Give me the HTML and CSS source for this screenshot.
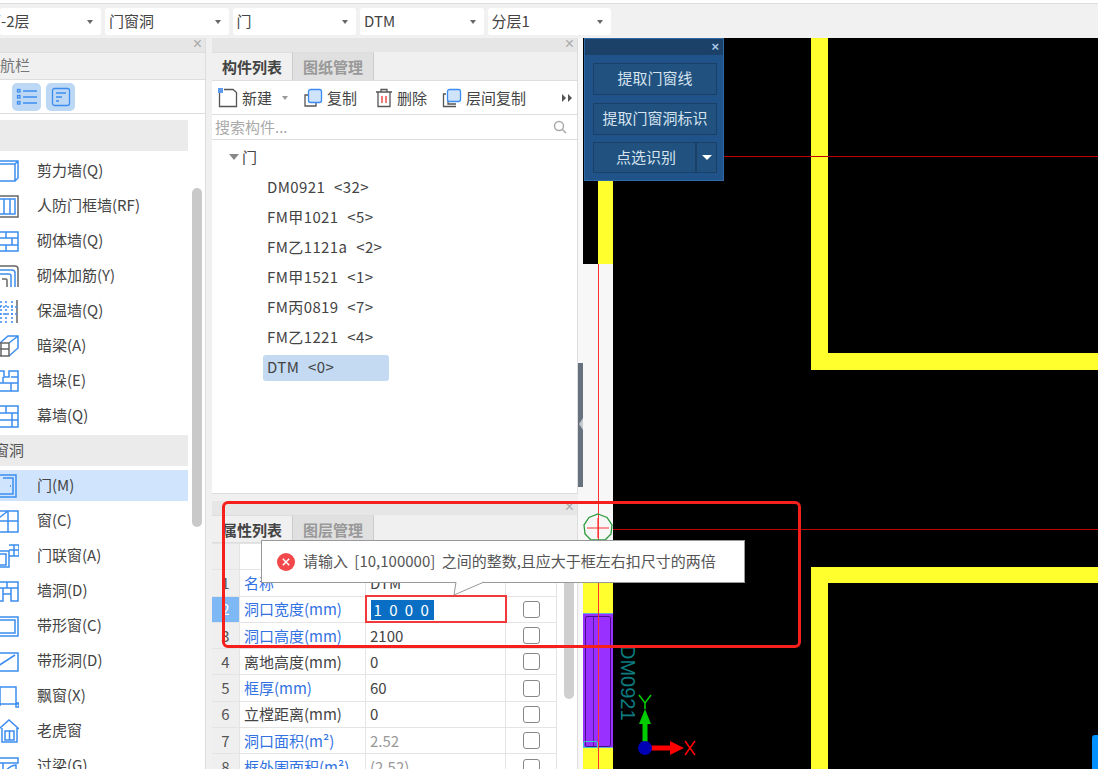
FILE: index.html
```html
<!DOCTYPE html>
<html lang="zh">
<head>
<meta charset="utf-8">
<title>门窗洞</title>
<link rel="stylesheet" href="styles.css">
</head>
<body>
<div class="app">
  <header class="topbar">
    <div class="sel sel-first"><span class="clip-first">第-2层</span><i class="caret"></i></div>
    <div class="sel"><span>门窗洞</span><i class="caret"></i></div>
    <div class="sel"><span>门</span><i class="caret"></i></div>
    <div class="sel"><span>DTM</span><i class="caret"></i></div>
    <div class="sel"><span>分层1</span><i class="caret"></i></div>
  </header>
  <main class="main">
    <aside class="nav">
      <div class="panel-head"><span class="close">×</span></div>
      <div class="nav-title"><span>导航栏</span></div>
      <div class="nav-tools">
        <button class="tool-btn"><svg width="22" height="22" viewBox="0 0 22 22"><g fill="none" stroke="#3d8df0" stroke-width="1.3"><rect x="1.500" y="3.500" width="2.500" height="2.500"/><rect x="1.500" y="9.500" width="2.500" height="2.500"/><rect x="1.500" y="15.500" width="2.500" height="2.500"/><path d="M7 5H21M7 11H21M7 17H21"/></g></svg></button>
        <button class="tool-btn"><svg width="20" height="22" viewBox="0 0 20 22"><g fill="none" stroke="#3d8df0" stroke-width="1.300"><rect x="1.500" y="2.500" width="17" height="17" rx="2"/><path d="M5 7H15M5 11H11M5 15H8"/></g></svg></button>
      </div>
      <div class="nav-body">
        <ul class="nav-list">
          <li class="nav-group"></li>
          <li class="nav-row"><svg class="ic" viewBox="0 0 24 24"><path d="M0 5H20V22H0M20 22l3-3V2H3L0 5M20 5l3-3"/></svg>剪力墙(Q)</li>
          <li class="nav-row"><svg class="ic" viewBox="0 0 24 24"><path class="dk" d="M0 2H23V23H0"/><path d="M0 5H20V20H0M9 5V20M15 5V20"/></svg>人防门框墙(RF)</li>
          <li class="nav-row"><svg class="ic" viewBox="0 0 24 24"><path d="M0 3H23V22H0M0 9H23M0 16H23M11 3V9M17 9V16M11 16V22"/></svg>砌体墙(Q)</li>
          <li class="nav-row"><svg class="ic" viewBox="0 0 24 24"><path class="dk" d="M0 2H20Q23 2 23 5V23"/><path d="M0 6H17Q20 6 20 9V23M0 10H14Q16 10 16 12V23"/><path class="dk" d="M7 15H11Q12 15 12 16V23"/></svg>砌体加筋(Y)</li>
          <li class="nav-row"><svg class="ic" viewBox="0 0 24 24"><path class="dk" d="M22 1V24"/><path stroke-dasharray="2 2" d="M6 2V24M11 2V24M17 2V24M0 8H23M0 15H23"/></svg>保温墙(Q)</li>
          <li class="nav-row"><svg class="ic" viewBox="0 0 24 24"><path d="M14 9L23 2M5 9L13 2H23V14L14 22"/><path class="dk" d="M0 9H14V22H0M0 15H14M6 9V22"/></svg>暗梁(A)</li>
          <li class="nav-row"><svg class="ic" viewBox="0 0 24 24"><path d="M3 2H9V8H14V2H23V22H0V8H3M0 14H23M8 8V14M16 8H23M16 14V22"/></svg>墙垛(E)</li>
          <li class="nav-row"><svg class="ic" viewBox="0 0 24 24"><path d="M0 2H23V23H0M0 9H23M0 16H23M11 2V9M17 9V23"/></svg>幕墙(Q)</li>
          <li class="nav-group"><span class="clip-group">门窗洞</span></li>
          <li class="nav-row active"><svg class="ic" viewBox="0 0 24 24"><path d="M5 1H21V23H5M8 4H18V20H5M15 12h1"/></svg>门(M)</li>
          <li class="nav-row"><svg class="ic" viewBox="0 0 24 24"><path d="M0 2H23V23H0M0 12H23M13 2V23M0 12L13 2"/></svg>窗(C)</li>
          <li class="nav-row"><svg class="ic" viewBox="0 0 24 24"><path d="M2 7H14V23H2M5 10H11V21H5M14 1H24V12H14M19 1V12M14 6H24"/></svg>门联窗(A)</li>
          <li class="nav-row"><svg class="ic" viewBox="0 0 24 24"><path d="M0 3H23V22H16V15H8V22H0ZM0 9H23M12 3V9M16 9V15M8 9V15"/></svg>墙洞(D)</li>
          <li class="nav-row"><svg class="ic" viewBox="0 0 24 24"><path d="M0 3H23V22H0M0 6H20V19H0"/></svg>带形窗(C)</li>
          <li class="nav-row"><svg class="ic" viewBox="0 0 24 24"><path d="M0 4H23V22H0M0 19L20 6"/></svg>带形洞(D)</li>
          <li class="nav-row"><svg class="ic" viewBox="0 0 24 24"><path d="M5 22V3H21V22M3 20H24M21 19h3v4h-3z"/></svg>飘窗(X)</li>
          <li class="nav-row"><svg class="ic" viewBox="0 0 24 24"><path d="M4 10L14 1L24 10M7 9V23H22V9M10 12H19V21H10ZM14.500 12V21"/></svg>老虎窗</li>
          <li class="nav-row"><svg class="ic" viewBox="0 0 24 24"><path d="M5 4H23V9H5M8 9V22M8 22Q12 12 21 11V22"/></svg>过梁(G)</li>
        </ul>
        <div class="nav-scroll"></div>
      </div>
    </aside>

    <section class="center">
      <div class="panel list-panel">
        <div class="panel-head"><span class="close">×</span></div>
        <div class="tabs"><span class="tab on">构件列表</span><span class="tab">图纸管理</span></div>
        <div class="toolbar">
          <span class="tb-item"><svg width="20" height="20" viewBox="0 0 20 20"><path fill="none" stroke="#555" stroke-width="1.300" d="M1.500 5V18.500H18.500V4.500L15 1.500H6"/><rect x="0" y="0" width="5" height="5" fill="#5d9bec"/></svg>新建<i class="caret small"></i></span>
          <span class="tb-item"><svg width="20" height="20" viewBox="0 0 20 20"><path fill="none" stroke="#555" stroke-width="1.300" d="M5 7H2V18H13V15"/><rect x="5.500" y="1.500" width="13" height="13" rx="2" fill="#cfe3fb" stroke="#3d8df0" stroke-width="1.300"/></svg>复制</span>
          <span class="tb-item"><svg width="21" height="20" viewBox="-3 0 21 20"><path fill="none" stroke="#555" stroke-width="1.300" d="M1 4H17M6 4V1.500H12V4M3 4V18.500H15V4"/><path fill="none" stroke="#e33" stroke-width="1.300" d="M7 8V15M11 8V15"/></svg>删除</span>
          <span class="tb-item"><svg width="20" height="20" viewBox="0 0 20 20"><path fill="none" stroke="#555" stroke-width="1.300" d="M4 6H1.500V18.500H14M6 9V16H14"/><rect x="5.500" y="1.500" width="13" height="12" rx="2" fill="#cfe3fb" stroke="#3d8df0" stroke-width="1.300"/></svg>层间复制</span>
          <span class="tb-more"><svg width="10" height="8" viewBox="0 0 10 8"><path d="M0 0L4 4L0 8ZM6 0L10 4L6 8Z" fill="#555"/></svg></span>
        </div>
        <div class="search"><span>搜索构件...</span><svg width="14" height="14" viewBox="0 0 14 14"><circle cx="6" cy="6" r="4.500" fill="none" stroke="#aaa" stroke-width="1.500"/><path d="M9.500 9.500L13 13" stroke="#aaa" stroke-width="1.500"/></svg></div>
        <ul class="tree">
          <li class="tree-root"><i class="caret tri"></i>门</li>
          <li class="tree-item"><span>DM0921 &lt;32&gt;</span></li>
          <li class="tree-item"><span>FM甲1021 &lt;5&gt;</span></li>
          <li class="tree-item"><span>FM乙1121a &lt;2&gt;</span></li>
          <li class="tree-item"><span>FM甲1521 &lt;1&gt;</span></li>
          <li class="tree-item"><span>FM丙0819 &lt;7&gt;</span></li>
          <li class="tree-item"><span>FM乙1221 &lt;4&gt;</span></li>
          <li class="tree-item sel-item"><span>DTM &lt;0&gt;</span></li>
        </ul>
      </div>
      <div class="panel prop-panel">
        <div class="panel-head"><span class="close">×</span></div>
        <div class="tabs"><span class="tab on">属性列表</span><span class="tab">图层管理</span></div>
        <div class="prop-body">
          <table class="props">
            <colgroup><col class="c1"><col class="c2"><col class="c3"><col class="c4"></colgroup>
            <tr class="head"><td class="idx"></td><td></td><td></td><td></td></tr>
            <tr><td class="idx">1</td><td class="link">名称</td><td>DTM</td><td class="chk"></td></tr>
            <tr><td class="idx cur">2</td><td class="link">洞口宽度(mm)</td><td class="editing"><span class="hl">1 0 0 0</span></td><td class="chk"><i class="box"></i></td></tr>
            <tr><td class="idx">3</td><td class="link">洞口高度(mm)</td><td>2100</td><td class="chk"><i class="box"></i></td></tr>
            <tr><td class="idx">4</td><td>离地高度(mm)</td><td>0</td><td class="chk"><i class="box"></i></td></tr>
            <tr><td class="idx">5</td><td class="link">框厚(mm)</td><td>60</td><td class="chk"><i class="box"></i></td></tr>
            <tr><td class="idx">6</td><td>立樘距离(mm)</td><td>0</td><td class="chk"><i class="box"></i></td></tr>
            <tr><td class="idx">7</td><td class="link">洞口面积(m²)</td><td class="mute">2.52</td><td class="chk"><i class="box"></i></td></tr>
            <tr><td class="idx">8</td><td class="link">框外围面积(m²)</td><td class="mute">(2.52)</td><td class="chk"><i class="box"></i></td></tr>
          </table>
          <div class="prop-scroll"></div>
        </div>
      </div>
    </section>

    <div class="gutter"><div class="handle"></div></div>

    <section class="canvas">
      <div class="y a1"></div>
      <div class="y a2"></div>
      <div class="y a3"></div>
      <div class="y a4"></div>
      <div class="y a5"></div>
      <div class="blank"></div>
      <div class="y a6"></div>
      <div class="door"><div class="door-in"></div><div class="door-foot"></div></div>
      <div class="y a7"></div>
      <div class="rv"></div>
      <div class="rh r1"></div>
      <div class="rh r2"></div>
      <svg class="mark" width="30" height="30" viewBox="0 0 30 30"><polygon points="15,1 24,4.500 29,12 28,21 22,27 8,27 2,21 1,12 6,4.500" fill="none" stroke="#2a9a3a" stroke-width="1.300"/><path d="M4 15H26M15 5V25" stroke="#f33" stroke-width="1.200"/></svg>
      <div class="dm">DM0921</div>
      <svg class="axis" width="70" height="70" viewBox="0 0 70 70"><path d="M10 54V24" stroke="#0c0" stroke-width="5"/><path d="M10 15L16 30H4Z" fill="#0c0"/><path d="M10 54H40" stroke="#f00" stroke-width="5"/><path d="M49 54L35 47V61Z" fill="#f00"/><circle cx="10" cy="54" r="7" fill="#0000b4"/><path d="M4 1L10 9L16 1M10 9V15" fill="none" stroke="#0c0" stroke-width="1.600"/><path d="M50 47L60 61M60 47L50 61" fill="none" stroke="#f00" stroke-width="1.600"/></svg>
      <div class="corner"></div>

      <div class="float">
        <div class="float-head"><span>×</span></div>
        <div class="float-btn">提取门窗线</div>
        <div class="float-btn">提取门窗洞标识</div>
        <div class="float-split">
          <div class="float-btn grow">点选识别</div>
          <div class="float-btn drop"><i class="caret white"></i></div>
        </div>
      </div>
    </section>
  </main>

  <div class="tooltip">
    <svg class="err" width="18" height="18" viewBox="0 0 18 18"><circle cx="9" cy="9" r="9" fill="#f2484b"/><path d="M5.800 5.800L12.200 12.200M12.200 5.800L5.800 12.200" stroke="#fff" stroke-width="1.500"/></svg>
    <span class="tip-text">请输入 [10,100000] 之间的整数,且应大于框左右扣尺寸的两倍</span>
    <svg class="tail" width="34" height="16" viewBox="0 0 34 16"><path d="M3 0L1 13L31 0" fill="#fff" stroke="#999"/><path d="M3.500 0H30V-1H3.500Z" fill="#fff"/></svg>
  </div>
  <div class="annot"></div>
</div>
</body>
</html>
```
FILE: styles.css
```css
* { box-sizing: border-box; }
html, body { margin: 0; height: 100%; }
body { overflow: hidden; background: #fff; }
ul { list-style: none; margin: 0; padding: 0; }
.app {
  position: relative;
  width: 1098px;
  height: 769px;
  overflow: hidden;
  display: flex;
  flex-direction: column;
  background: #f0f0f0;
  font: 15px/20px "Noto Sans CJK SC", "Noto Sans", sans-serif;
  color: #444;
}
.topbar {
  height: 38px;
  flex: none;
  display: flex;
  gap: 4px;
  background: #f1f1f1;
  border-top: 3px solid #fff;
  box-shadow: inset 0 1px 0 #ddd;
  padding-top: 5px;
}
.sel {
  width: 123.500px;
  height: 27px;
  background: #fff;
  border-radius: 3px;
  display: flex;
  align-items: center;
  justify-content: space-between;
  padding: 0 8px 0 4px;
  white-space: nowrap;
}
.sel span { margin-bottom: 2px; }
.sel-first { width: 101px; padding-left: 0; overflow: hidden; }
.clip-first { margin-left: -14px; }
.caret {
  display: block;
  width: 0;
  height: 0;
  border: 3.500px solid transparent;
  border-top: 4px solid #666;
  border-bottom: 0;
}
.caret.small { border-top-color: #999; margin-left: 6px; }
.caret.white { border-top-color: #fff; border-width: 5px 5px 0; }
.caret.tri { border-top-color: #888; border-width: 6px 5px 0; margin: 0 3px 0 -13px; }

.main { flex: 1; min-height: 0; display: flex; }
.nav { width: 206px; flex: none; display: flex; flex-direction: column; background: #fff; border-right: 1px solid #ddd; }
.panel-head { height: 14px; flex: none; background: #e6e6e6; position: relative; }
.close { position: absolute; right: 3px; top: -3px; color: #aaa; font: 16px/18px "Liberation Sans", sans-serif; }
.nav-title { height: 28px; flex: none; background: #f0f0f0; border-top: 1px solid #ddd; border-bottom: 1px solid #ddd; overflow: hidden; color: #777; line-height: 24px; }
.nav-title span { margin-left: -15px; display: block; }
.nav-tools { height: 34px; flex: none; display: flex; gap: 5px; align-items: center; padding-left: 12px; border-bottom: 1px solid #ddd; }
.tool-btn { width: 29px; height: 28px; padding: 0; border: 0; border-radius: 5px; background: #bcd8f5; display: flex; align-items: center; justify-content: center; }
.nav-body { flex: 1; min-height: 0; display: flex; padding-top: 6px; overflow: hidden; }
.nav-list { width: 188px; flex: none; display: flex; flex-direction: column; gap: 4px; }
.nav-group { height: 31px; flex: none; background: #ebebeb; line-height: 30px; color: #555; overflow: hidden; }
.clip-group { display: block; margin-left: -21px; }
.nav-row { height: 31px; flex: none; display: flex; align-items: center; gap: 18px; color: #444; white-space: nowrap; padding-bottom: 2px; }
.nav-row.active { background: #d0e5fd; }
.ic { width: 24px; height: 24px; margin: 2px 0 0 -5px; flex: none; fill: none; stroke: #3d8df0; stroke-width: 1.500; }
.ic .dk { stroke: #666; }
.nav-scroll { width: 10px; height: 339px; margin: 68px 0 0 4px; background: #c9c9c9; border-radius: 5px; flex: none; }

.center { width: 366px; margin-left: 6px; flex: none; display: flex; flex-direction: column; gap: 7px; }
.panel { display: flex; flex-direction: column; background: #fff; border-right: 1px solid #ddd; overflow: hidden; }
.list-panel { height: 456px; flex: none; border-bottom: 1px solid #ddd; }
.prop-panel { flex: 1; min-height: 0; }
.tabs { height: 29px; flex: none; display: flex; background: #f0f0f0; border-bottom: 1px solid #ddd; }
.prop-panel .tabs { height: 28px; }
.tab { width: 81px; text-align: center; line-height: 27px; font-weight: 700; background: #e0e0e0; color: #999; border-top: 1px solid #ddd; border-right: 1px solid #ccc; }
.list-panel .tab { line-height: 28px; }
.tab.on { background: #f0f0f0; color: #444; }
.toolbar { height: 34px; flex: none; display: flex; align-items: center; padding-left: 6px; gap: 15px; border-bottom: 1px solid #ddd; position: relative; }
.tb-item { display: flex; align-items: center; gap: 4px; }
.tb-item svg { flex: none; }
.tb-more { margin-left: auto; margin-right: 4px; width: 12px; height: 24px; display: flex; align-items: center; justify-content: center; }
.search { height: 25px; flex: none; display: flex; align-items: center; justify-content: space-between; padding: 0 10px 0 3px; color: #aaa; border-bottom: 1px solid #ddd; }
.tree { flex: 1; padding-top: 3px; }
.tree-root { height: 30px; display: flex; align-items: center; padding: 0 0 2px 30px; }
.tree-item { height: 30px; display: flex; align-items: center; padding-left: 51px; word-spacing: 5px; letter-spacing: .4px; }
.tree-item span { display: block; padding: 2px 4px 4px; }
.tree-item.sel-item span { width: 126px; background: #c3daf2; border-radius: 3px; }
.prop-body { flex: 1; min-height: 0; position: relative; display: flex; overflow: hidden; }
.props { width: 345px; margin-left: -1px; border-collapse: collapse; table-layout: fixed; flex: none; height: 0; }
.c1 { width: 28px; } .c2 { width: 126px; } .c3 { width: 140px; } .c4 { width: 51px; }
.props td { height: 26.300px; padding: 0 4px; border: 1px solid #e4e4e4; white-space: nowrap; overflow: hidden; color: #444; }
.props td.idx { background: #efefef; text-align: center; color: #555; padding: 0; }
.props td.idx.cur { background: #7eb9f6; color: #fff; }
.props td.link { color: #3272e2; }
.props td.mute { color: #999; }
.props td.editing { border: 2px solid #f0393a; padding: 0 4px; }
.hl { display: inline-block; background: #0a6fc4; color: #fff; padding: 0 3px; line-height: 20px; letter-spacing: 2px; vertical-align: middle; }
.props td.chk { text-align: center; padding: 0; }
.box { display: block; width: 17px; height: 17px; margin: 0 auto; border: 1px solid #888; border-radius: 3px; background: #fff; }
.prop-scroll { width: 10px; height: 156px; margin-left: 7px; background: #cfcfcf; border-radius: 5px; flex: none; }

.gutter { width: 5px; flex: none; background: #f7f7f7; padding-top: 325px; margin-left: 0; }
.handle { height: 124px; background: #66737f; position: relative; }
.handle::after { content: ""; position: absolute; right: 0; top: 55px; border: 6px solid transparent; border-left: 0; border-right: 4px solid #c4c9ce; }

.canvas { flex: 1; position: relative; background: #000; overflow: hidden; }
.y { position: absolute; background: #ffff2e; }
.a1 { left: 228px; top: 0; width: 17px; height: 332px; }
.a2 { left: 228px; top: 315px; right: 0; height: 17px; }
.a3 { left: 228px; top: 529px; right: 0; height: 16px; }
.a4 { left: 228px; top: 529px; width: 17px; bottom: 0; }
.a5 { left: 15px; top: 143px; width: 15px; height: 83px; }
.blank { position: absolute; left: 0; top: 226px; width: 30px; height: 319px; background: #f7f7f7; }
.a6 { left: 0; top: 545px; width: 30px; height: 30px; }
.door { position: absolute; left: 0; top: 575px; width: 30px; height: 135px; background: #9a30ff; border: 1px solid #6ad; border-width: 1px 0; }
.door-in { position: absolute; left: 2px; right: 2px; top: 2px; bottom: 0; border: 1.500px solid #46108c; border-radius: 2px; }
.door-in::before { content: ""; position: absolute; left: 7px; top: 0; bottom: 0; width: 1px; background: #5a1aa8; }
.door-foot { position: absolute; left: 0; bottom: -1px; width: 15px; height: 7px; border: 1px solid #3cc; border-radius: 2px; }
.a7 { left: 0; top: 710px; width: 30px; bottom: 0; }
.rv { position: absolute; left: 15px; top: 226px; width: 1px; bottom: 0; background: #f33; }
.rh { position: absolute; height: 1px; right: 0; background: #c00000; }
.r1 { top: 118px; left: 141px; }
.r2 { top: 491px; left: 30px; }
.mark { position: absolute; left: 0; top: 475px; }
.dm { position: absolute; left: 34px; top: 607px; writing-mode: vertical-rl; color: #0c7c80; font: 20px/22px "Liberation Sans", sans-serif; }
.axis { position: absolute; left: 52px; top: 656px; }
.corner { position: absolute; right: 0; top: 697px; width: 6px; bottom: 0; background: #0090ff; border-top-left-radius: 3px; }

.float { position: absolute; left: 1px; top: 0; width: 140px; height: 143px; background: #20538a; border: 1px solid #2e6aa6; display: flex; flex-direction: column; gap: 8px; padding-bottom: 8px; }
.float-head { height: 16px; flex: none; background: #1c4168; text-align: right; color: #a9c6e6; font: 700 13px/16px "Liberation Sans", sans-serif; padding-right: 4px; }
.float-btn { height: 32px; margin: 0 6px 0 8px; flex: none; display: flex; align-items: center; justify-content: center; background: #20517f; border: 1px solid #1b4068; color: #d6e3ef; white-space: nowrap; padding-bottom: 2px; }
.float-split { display: flex; margin: -1px 6px 0 8px; }
.float-split .float-btn { margin: 0; height: 31px; }
.float-split .grow { padding-left: 3px; }
.float-split .drop { padding-bottom: 0; }
.grow { flex: 1; }
.drop { width: 21px; }

.tooltip {
  position: absolute;
  left: 261px;
  top: 540px;
  width: 484px;
  height: 43px;
  background: #fff;
  border: 1px solid #999;
  display: flex;
  align-items: center;
  gap: 8px;
  padding-left: 15px;
  color: #555;
  white-space: nowrap;
}
.tip-text { word-spacing: 3px; margin-bottom: 2px; }
.tail { position: absolute; left: 191px; top: 41px; overflow: visible; }
.annot {
  position: absolute;
  left: 222px;
  top: 501px;
  width: 579px;
  height: 147px;
  border: 3.500px solid #f5201c;
  border-radius: 6px;
}
```
